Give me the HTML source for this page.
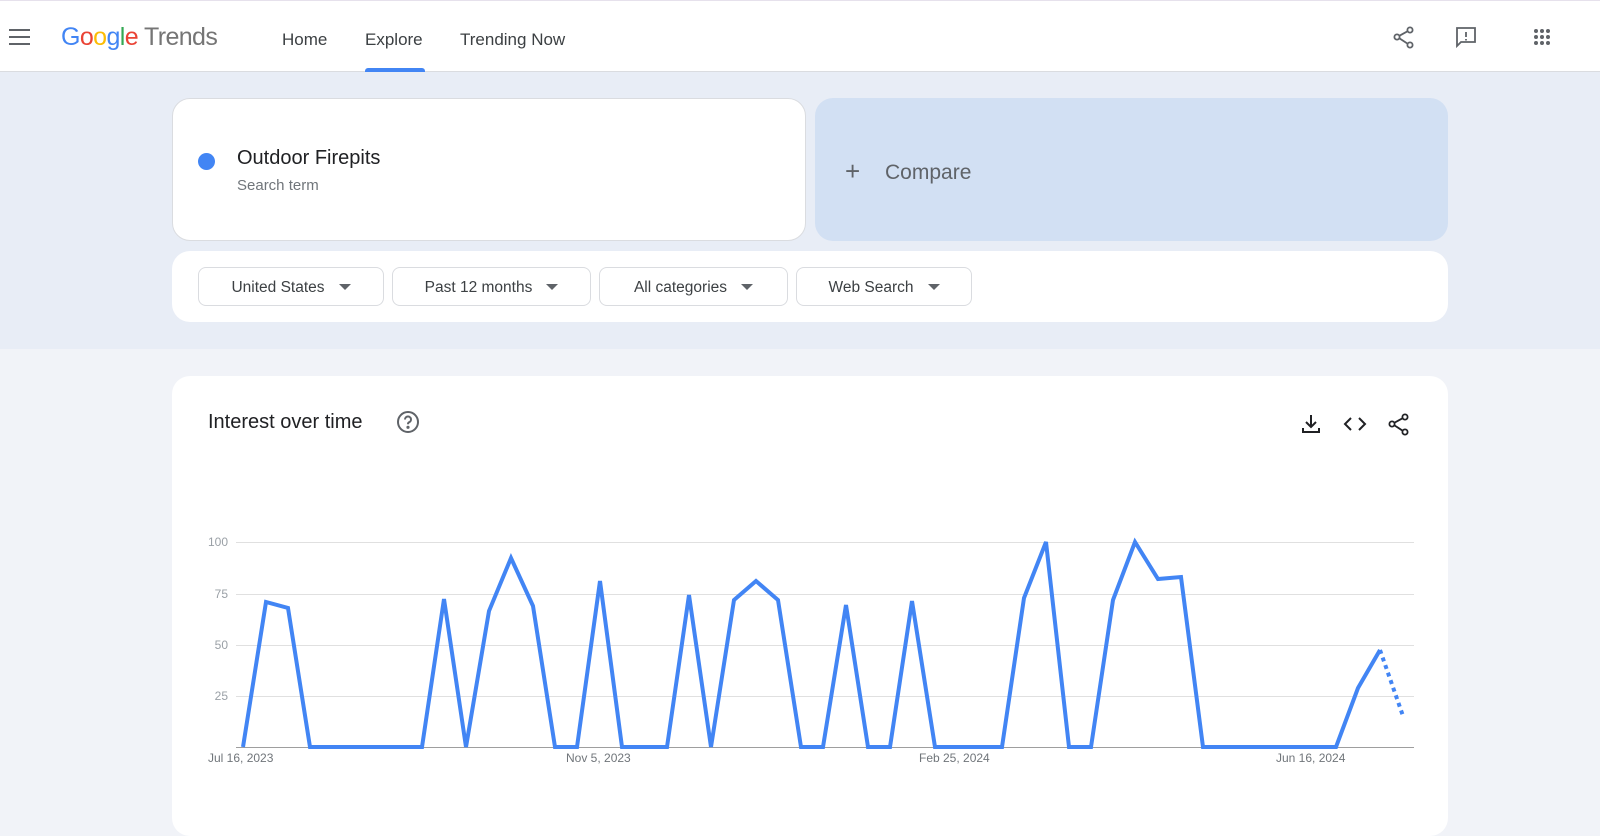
<!DOCTYPE html>
<html><head><meta charset="utf-8"><style>
*{box-sizing:border-box;margin:0;padding:0}
body{width:1600px;height:814px;overflow:hidden;background:#f1f3f8;font-family:"Liberation Sans",Arial,sans-serif;position:relative}
.hdr{position:absolute;left:0;top:0;width:1600px;height:72px;background:#fff;border-top:1px solid #e6e1ec;border-bottom:1px solid #dadce0}
.band{position:absolute;left:0;top:72px;width:1600px;height:277px;background:#e8edf6}
.nav{position:absolute;top:29px;font-size:17px;color:#3c4043}
.card{position:absolute;background:#fff;border-radius:18px}
.chip{position:absolute;top:267px;height:39px;border:1px solid #dadce0;border-radius:8px;background:#fff;font-size:15.5px;color:#3c4043;padding:11px 0 0 0;text-align:center}
.chip:after{content:"";display:inline-block;margin-left:14px;border-left:6px solid transparent;border-right:6px solid transparent;border-top:6px solid #5f6368;vertical-align:2px}
.yl{position:absolute;font-size:12px;color:#9aa0a6;text-align:right;width:30px;left:198px}
.xl{position:absolute;top:751px;font-size:12px;color:#70757a}
</style></head><body>
<div class="hdr">
 <svg style="position:absolute;left:9px;top:28px" width="22" height="16"><rect y="0" width="21" height="2" fill="#5f6368"/><rect y="7" width="21" height="2" fill="#5f6368"/><rect y="14" width="21" height="2" fill="#5f6368"/></svg>
 <div style="position:absolute;left:61px;top:22px;font-size:25px;letter-spacing:-0.6px"><span style="color:#4285f4">G</span><span style="color:#ea4335">o</span><span style="color:#fbbc05">o</span><span style="color:#4285f4">g</span><span style="color:#34a853">l</span><span style="color:#ea4335">e</span> <span style="color:#757575">Trends</span></div>
 <div class="nav" style="left:282px">Home</div>
 <div class="nav" style="left:365px">Explore</div>
 <div style="position:absolute;left:365px;top:67px;width:60px;height:5px;background:#4285f4;border-radius:3px 3px 0 0"></div>
 <div class="nav" style="left:460px">Trending Now</div>
 <svg style="position:absolute;left:1392px;top:24px" width="24" height="24" fill="none" stroke="#5f6368" stroke-width="1.8"><circle cx="18" cy="5" r="2.6"/><circle cx="5" cy="12" r="2.6"/><circle cx="18" cy="20" r="2.6"/><path d="M7.3 10.8 15.7 6.2M7.3 13.2 15.7 18.8"/></svg>
 <svg style="position:absolute;left:1454px;top:24px" width="24" height="24" fill="none" stroke="#5f6368" stroke-width="1.8"><path d="M3 3h18v14H7l-4 4z"/><path d="M12 7v5M12 14v1.5"/></svg>
 <svg style="position:absolute;left:1533px;top:27px" width="18" height="18" fill="#5f6368"><circle cx="3" cy="3" r="2"/><circle cx="9" cy="3" r="2"/><circle cx="15" cy="3" r="2"/><circle cx="3" cy="9" r="2"/><circle cx="9" cy="9" r="2"/><circle cx="15" cy="9" r="2"/><circle cx="3" cy="15" r="2"/><circle cx="9" cy="15" r="2"/><circle cx="15" cy="15" r="2"/></svg>
</div>
<div class="band"></div>
<div class="card" style="left:172px;top:98px;width:634px;height:143px;border:1px solid #dadce0">
 <div style="position:absolute;left:25px;top:54px;width:17px;height:17px;border-radius:50%;background:#4285f4"></div>
 <div style="position:absolute;left:64px;top:48px;font-size:20px;color:#202124">Outdoor Firepits</div>
 <div style="position:absolute;left:64px;top:78px;font-size:15px;color:#70757a">Search term</div>
</div>
<div style="position:absolute;left:815px;top:98px;width:633px;height:143px;border-radius:18px;background:#d2e0f3">
 <div style="position:absolute;left:30px;top:60px;font-size:26px;color:#5f6368;line-height:26px">+</div>
 <div style="position:absolute;left:70px;top:63px;font-size:21px;color:#5f6368">Compare</div>
</div>
<div class="card" style="left:172px;top:251px;width:1276px;height:71px"></div>
<div class="chip" style="left:198px;width:186px">United States</div>
<div class="chip" style="left:392px;width:199px">Past 12 months</div>
<div class="chip" style="left:599px;width:189px">All categories</div>
<div class="chip" style="left:796px;width:176px">Web Search</div>
<div class="card" style="left:172px;top:376px;width:1276px;height:460px"></div>
<div style="position:absolute;left:208px;top:411px;font-size:20px;color:#202124">Interest over time</div>
<svg style="position:absolute;left:396px;top:410px" width="24" height="24" fill="none" stroke="#5f6368" stroke-width="2"><circle cx="12" cy="12" r="10"/><path d="M9 9.5a3 3 0 1 1 4 2.8c-.8.4-1 1-1 2"/><circle cx="12" cy="17.3" r=".6" fill="#5f6368"/></svg>
<svg style="position:absolute;left:1300px;top:413px" width="22" height="22" fill="none" stroke="#202124" stroke-width="2"><path d="M11 2v12M6 9l5 5 5-5M3 15v4h16v-4"/></svg>
<svg style="position:absolute;left:1343px;top:413px" width="24" height="22" fill="none" stroke="#202124" stroke-width="2"><path d="M8 5 2 11l6 6M16 5l6 6-6 6"/></svg>
<svg style="position:absolute;left:1387px;top:412px" width="24" height="24" fill="none" stroke="#202124" stroke-width="1.8"><circle cx="18" cy="5" r="2.6"/><circle cx="5" cy="12" r="2.6"/><circle cx="18" cy="20" r="2.6"/><path d="M7.3 10.8 15.7 6.2M7.3 13.2 15.7 18.8"/></svg>
<div class="yl" style="top:535px">100</div><div class="yl" style="top:587px">75</div><div class="yl" style="top:638px">50</div><div class="yl" style="top:689px">25</div>
<svg style="position:absolute;left:0;top:0" width="1600" height="814">
<g stroke="#e0e0e0" stroke-width="1"><path d="M236 542.5H1414M236 594.5H1414M236 645.5H1414M236 696.5H1414"/></g>
<path d="M236 747.5H1414" stroke="#9e9e9e" stroke-width="1"/>
<polyline fill="none" stroke="#4285f4" stroke-width="4" stroke-linejoin="miter" points="243,747 266,602 288,608 310,747 422,747 444,599 466,747 489,611 511,558 533,606 555,747 577,747 600,581 622,747 667,747 689,595 711,747 734,600 756,581 778,600 801,747 823,747 846,605 868,747 890,747 912,601 935,747 1002,747 1024,598 1046,542 1069,747 1091,747 1113,600 1135,542 1158,579 1181,577 1203,747 1336,747 1358,688 1380,650"/>
<path d="M1380 650 1403 716" stroke="#4285f4" stroke-width="4" stroke-dasharray="4 4" fill="none"/>
</svg>
<div class="xl" style="left:208px">Jul 16, 2023</div>
<div class="xl" style="left:566px">Nov 5, 2023</div>
<div class="xl" style="left:919px">Feb 25, 2024</div>
<div class="xl" style="left:1276px">Jun 16, 2024</div>
</body></html>
